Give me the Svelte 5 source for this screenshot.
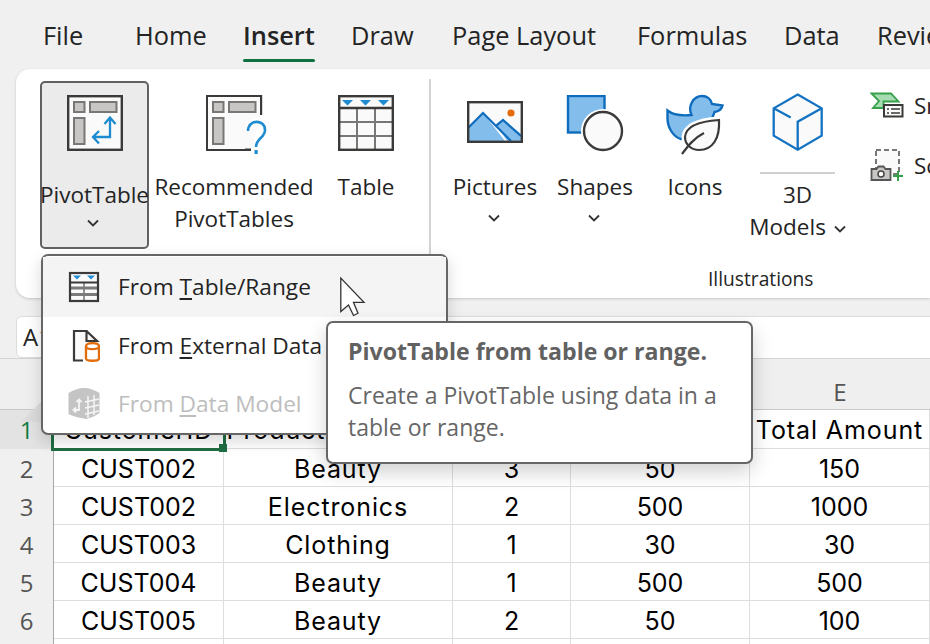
<script>
  const tabs = ['File', 'Home', 'Insert', 'Draw', 'Page Layout', 'Formulas', 'Data', 'Review'];
  const rows = [
    ['1', 'CustomerID', 'Product Category', 'Quantity', 'Price per Unit', 'Total Amount'],
    ['2', 'CUST002', 'Beauty', '3', '50', '150'],
    ['3', 'CUST002', 'Electronics', '2', '500', '1000'],
    ['4', 'CUST003', 'Clothing', '1', '30', '30'],
    ['5', 'CUST004', 'Beauty', '1', '500', '500'],
    ['6', 'CUST005', 'Beauty', '2', '50', '100'],
    ['7', '', '', '', '', '']
  ];
  const hasLower = (s) => /[a-z]/.test(s);
</script>

<div class="app">
  <nav class="tabs">
    {#each tabs as t}
      <div class="tab" class:active={t === 'Insert'}><span>{t}</span></div>
    {/each}
  </nav>

  <section class="ribbon">
    <div class="btn pivot">
      <svg width="56" height="56" viewBox="66 95 56 56">
        <rect x="67.2" y="96.2" width="53.6" height="53.6" fill="#fafafa" stroke="#3b3a39" stroke-width="2.4"/>
        <g fill="#c8c6c4" stroke="#797775" stroke-width="2">
          <rect x="73" y="102" width="10.5" height="10"/><rect x="89" y="102" width="26.5" height="10"/><rect x="73" y="118" width="10.5" height="26"/>
        </g>
        <path d="M109 118v19H92M103.500 124l5.500-6.500 5.500 6.500M98 131l-6 6 6 6.500" fill="none" stroke="#1f8bd0" stroke-width="2.300"/>
      </svg>
      <span class="label">PivotTable</span>
      <svg class="chev" width="12" height="8" viewBox="0 0 12 8"><path d="M1 1.500l5 5 5-5"/></svg>
    </div>

    <div class="btn rec">
      <svg width="64" height="62" viewBox="206 95 64 62">
        <path d="M261 115V96.200H207.200V149.800H251" fill="#fafafa" stroke="#3b3a39" stroke-width="2.400"/>
        <path d="M208 97H260V118L245 135V149H208Z" fill="#fafafa"/>
        <g fill="#c8c6c4" stroke="#797775" stroke-width="2">
          <rect x="213" y="102" width="10.500" height="10"/><rect x="229" y="102" width="26.500" height="10"/><rect x="213" y="118" width="10.500" height="26"/>
        </g>
        <path d="M248 131c0-12 17-12 17-1 0 8-9 8-9 17" fill="none" stroke="#fff" stroke-width="7"/>
        <path d="M248 131c0-12 17-12 17-1 0 8-9 8-9 17" fill="none" stroke="#1f8bd0" stroke-width="2.600"/>
        <rect x="254.500" y="150" width="3.200" height="4" fill="#1f8bd0"/>
      </svg>
      <span class="label">Recommended<br>PivotTables</span>
    </div>

    <div class="btn tbl">
      <svg width="56" height="56" viewBox="339 95 56 56">
        <rect x="340" y="96" width="54" height="54" fill="#fafafa"/>
        <path d="M358 108v42M376 108v42M340 122h54M340 136h54" stroke="#797775" stroke-width="2" fill="none"/>
        <rect x="340.200" y="96.200" width="53.600" height="53.600" fill="none" stroke="#3b3a39" stroke-width="2.400"/>
        <path d="M340 108h54" stroke="#3b3a39" stroke-width="2.400"/>
        <path d="M343 100h11l-5.500 5.500zM361 100h11l-5.500 5.500zM379 100h11l-5.500 5.500z" fill="#1f8bd0"/>
      </svg>
      <span class="label">Table</span>
    </div>

    <div class="sep"></div>

    <div class="btn pics">
      <svg width="56" height="56" viewBox="467 95 56 56">
        <rect x="468.200" y="102.200" width="53.600" height="39.600" fill="#fafafa"/>
        <path d="M469 127l14-14 22 28H469Z" fill="#83bdec"/>
        <path d="M496 124l7-5 18 15v7h-14Z" fill="#83bdec"/>
        <path d="M468 128l15-15 28 28M496 126l7-6 18 16" fill="none" stroke="#0f6cbd" stroke-width="2.200"/>
        <circle cx="511" cy="113" r="3.600" fill="#e36c0a"/>
        <rect x="468.200" y="102.200" width="53.600" height="39.600" fill="none" stroke="#3b3a39" stroke-width="2.400"/>
      </svg>
      <span class="label">Pictures</span>
      <svg class="chev low" width="12" height="8" viewBox="0 0 12 8"><path d="M1 1.500l5 5 5-5"/></svg>
    </div>

    <div class="btn shapes">
      <svg width="58" height="58" viewBox="566 95 58 58">
        <rect x="568" y="96" width="36.500" height="36.500" fill="#83bdec" stroke="#0f6cbd" stroke-width="2.400"/>
        <circle cx="603" cy="131" r="22" fill="#fff"/>
        <circle cx="603" cy="131" r="19" fill="#fafafa" stroke="#3b3a39" stroke-width="2.400"/>
      </svg>
      <span class="label">Shapes</span>
      <svg class="chev low" width="12" height="8" viewBox="0 0 12 8"><path d="M1 1.500l5 5 5-5"/></svg>
    </div>

    <div class="btn icons">
      <svg width="58" height="62" viewBox="666 94 58 62">
        <path d="M667.500 110.500c5 4 14 5.500 24 4.500-4-9 2-19 10.500-19 5 0 9 3 10 8l10.500 1.500c-1 4-4 6-8 6.500l-3 8-22 18-9 1c-8-3-13-12-13-21Z" fill="#83bdec" stroke="#0f6cbd" stroke-width="2.400"/>
        <path d="M719 120c-16 1-33 5-34 17 0 8 7 13 14 13 14 0 21-12 20-30Z" fill="#fff" stroke="#fff" stroke-width="7"/>
        <path d="M719 120c-16 1-33 5-34 17 0 8 7 13 14 13 14 0 21-12 20-30Z" fill="#fafafa" stroke="#3b3a39" stroke-width="2.200"/>
        <path d="M682 154c6-8 12-16 22-21" fill="none" stroke="#3b3a39" stroke-width="2.200"/>
      </svg>
      <span class="label">Icons</span>
    </div>

    <div class="btn models">
      <svg width="52" height="58" viewBox="771 93 52 58">
        <path d="M796.700 94.500l24 13.800v27.400l-24 14-24-14V108.300Z" fill="#fafafa" stroke="#1372c2" stroke-width="2.300"/>
        <path d="M796.700 150v-28.300l24-13.400M772.700 108.300l17 9.200" fill="none" stroke="#1372c2" stroke-width="2.300"/>
      </svg>
      <div class="rule"></div>
      <span class="label">3D<br>Models <svg class="chev inl" width="12" height="8" viewBox="0 0 12 8"><path d="M1 1.500l5 5 5-5"/></svg></span>
    </div>

    <div class="side">
      <div class="side-item">
        <svg width="34" height="26" viewBox="869 92 34 26">
          <path d="M870.500 93.500H890l7.500 8H882.500V108H872l6-7Z" fill="#a7dcb3" stroke="#37a04b" stroke-width="1.800"/>
          <rect x="883" y="105" width="18.500" height="11.500" fill="#fafafa" stroke="#3b3a39" stroke-width="2"/>
          <path d="M886 109h2M890 109h9M886 113h2M890 113h9" stroke="#3b3a39" stroke-width="1.400"/>
        </svg>
        <span>Smart</span>
      </div>
      <div class="side-item">
        <svg width="34" height="34" viewBox="869 148 34 34">
          <rect x="875" y="150" width="23" height="24" fill="#fafafa" stroke="#777" stroke-width="2" stroke-dasharray="5 3"/>
          <path d="M870.500 169h5l2-2.500h5l2 2.500h5v11h-19Z" fill="#c8c6c4" stroke="#555" stroke-width="1.800"/>
          <circle cx="880" cy="174" r="3" fill="#fff" stroke="#444" stroke-width="1.500"/>
          <path d="M897 171v10M892 176h10" stroke="#37a04b" stroke-width="2"/>
        </svg>
        <span>Screenshot</span>
      </div>
    </div>

    <div class="group-title">Illustrations</div>
  </section>

  <div class="fbar">
    <div class="namebox">A1</div>
    <div class="formula"></div>
  </div>

  <div class="sheet">
    <div class="cols">
      <div class="corner"><i></i></div>
      <div>A</div><div>B</div><div>C</div><div>D</div><div>E</div>
    </div>
    {#each rows as r, i}
      <div class="row" class:first={i === 0}>
        {#each r as c, j}
          <div class={j === 0 ? 'rh' : 'cell'} class:word={j > 0 && hasLower(c)}>{c}</div>
        {/each}
      </div>
    {/each}
    <div class="sel"><b></b></div>
  </div>

  <div class="menu">
    <div class="mi hover">
      <svg width="32" height="32" viewBox="67 269 32 32">
        <rect x="68" y="270" width="30" height="30" fill="#fafafa"/>
        <path d="M69 286h28M69 292.500h28" stroke="#7a7a7a" stroke-width="3"/>
        <path d="M83 281v18" stroke="#7a7a7a" stroke-width="1.600"/>
        <rect x="69" y="271" width="28" height="28" fill="none" stroke="#3b3a39" stroke-width="2.200"/>
        <path d="M68 280.500h30" stroke="#3b3a39" stroke-width="2"/>
        <path d="M72 273.500h8l-4 4zM86 273.500h8l-4 4z" fill="#1f8bd0"/>
      </svg>
      <span>From <u>T</u>able/Range</span>
    </div>
    <div class="mi">
      <svg width="32" height="34" viewBox="67 327 32 34">
        <path d="M73 329h12l11 11v18H73Z" fill="#fafafa"/>
        <path d="M82 358.500H73V329H85.500V339H96L85.500 329" fill="none" stroke="#3b3a39" stroke-width="2.200"/>
        <path d="M85 344.500c0-4.500 13-4.500 13 0v12c0 3-13 3-13 0Z" fill="#fff" stroke="#e36c0a" stroke-width="2.300"/>
        <path d="M85 344.500c0 3.500 13 3.500 13 0" fill="none" stroke="#e36c0a" stroke-width="2.300"/>
      </svg>
      <span>From <u>E</u>xternal Data</span>
    </div>
    <div class="mi off">
      <svg width="32" height="34" viewBox="68 385 32 34">
        <path d="M68.500 391c5-3 10-5 16-5 5 0 10 2 15 5v20c-4 3-9 5-13 6-6-1-12-2-18-5Z" fill="#c4c4c4"/>
        <path d="M88 394v22M94 393v20M85 400l14-3M85 406l14-3M85 412l14-3" stroke="#f5f5f5" stroke-width="1.500"/>
        <path d="M79 398v10h-5M76.500 400l2.500-2.500 2.500 2.500M76 405.500l-2.500 2.500 2.500 2.500" fill="none" stroke="#f5f5f5" stroke-width="1.800"/>
      </svg>
      <span>From <u>D</u>ata Model</span>
    </div>
  </div>

  <svg class="cursor" width="28" height="42" viewBox="339 276 28 42">
    <path d="M340.800 278v33.500l7.700-6.500 5 10.500 4.500-2.200-4.500-11h10.500Z" fill="#fff" stroke="#333" stroke-width="1.300"/>
  </svg>

  <div class="tip">
    <h4>PivotTable from table or range.</h4>
    <p>Create a PivotTable using data in a<br>table or range.</p>
  </div>
</div>

<style>
  :global(body) { margin: 0; }
  .app {
    position: relative; width: 930px; height: 644px; overflow: hidden;
    background: #f0f0f0; color: #242424;
    font-family: "Open Sans", "Noto Sans", sans-serif;
  }
  .tabs {
    display: grid; height: 69px; padding-left: 43px; box-sizing: border-box;
    grid-template-columns: 92px 108px 108px 101px 185px 147px 93px 100px;
    font-size: 25.400px; line-height: 71px; white-space: nowrap;
  }
  .tab span { display: inline-block; position: relative; }
  .tab.active { font-weight: 600; }
  .tab.active span::after {
    content: ""; position: absolute; left: 0; right: 0; top: 59px; height: 3px;
    background: #107040; border-radius: 2px;
  }
  .ribbon {
    position: relative; display: flex; height: 229px; margin-left: 16px; padding: 12px 0 0 24px;
    box-sizing: border-box; background: #fff; border-radius: 14px 0 0 14px;
    box-shadow: 0 1px 3px rgba(0,0,0,.18); font-size: 22.500px; overflow: hidden;
  }
  .ribbon > * { flex: none; }
  .btn { display: flex; flex-direction: column; align-items: center; padding-top: 14px; box-sizing: border-box; text-align: center; white-space: nowrap; line-height: 32px; }
  .label { margin-top: 20px; display: block; }
  .pivot { width: 109px; height: 168px; border: 2px solid #616161; border-radius: 5px; background: #ebebeb; padding-top: 12px; }
  .pivot .label { margin-top: 28px; }
  .pivot .chev { margin-left: -3px; margin-top: 8px; }
  .rec { width: 170px; }
  .rec svg:first-child { margin-left: 8px; margin-bottom: -6px; }
  .tbl { width: 94px; }
  .sep { width: 2px; height: 190px; margin: -2px 14px 0 16px; background: #d4d4d4; }
  .pics { width: 100px; }
  .pics .chev, .shapes .chev { margin-left: -2px; }
  .shapes { width: 100px; }
  .shapes svg:first-child { margin-bottom: -2px; }
  .icons { width: 100px; }
  .icons svg:first-child { margin-top: -1px; margin-bottom: -5px; }
  .models { width: 105px; }
  .models svg:first-child { margin-top: -2px; }
  .rule { width: 75px; height: 2px; background: #d0d0d0; margin-top: 21px; }
  .models .label { margin-top: 5px; }
  .chev { fill: none; stroke: #333; stroke-width: 1.800; margin-top: 10px; flex: none; }
  .chev.low { margin-top: 11px; }
  .chev.inl { margin: 0 0 0 2px; vertical-align: 2px; }
  .side { display: flex; flex-direction: column; margin: -6px 0 0 20px; white-space: nowrap; }
  .side-item { display: flex; align-items: center; gap: 10px; height: 60px; }
  .group-title { position: absolute; left: 692px; top: 196px; font-size: 19.200px; line-height: 28px; }
  .fbar { display: flex; height: 42px; margin-top: 18px; gap: 10px; box-sizing: border-box; }
  .namebox {
    width: 300px; margin-left: 16px; box-sizing: border-box; background: #fff; border: 1px solid #dcdcdc;
    border-radius: 6px; padding-left: 6px; font-size: 24px; line-height: 40px;
  }
  .formula { flex: 1; background: #fff; border-top: 1px solid #dcdcdc; }
  .sheet { position: relative; }
  .cols, .row {
    display: grid; grid-template-columns: 54px 170px 229px 118px 179px 180px; white-space: nowrap;
  }
  .cols { height: 52px; background: #efefef; border-top: 1px solid #d4d4d4; border-bottom: 1px solid #c8c8c8; box-sizing: border-box; font-size: 24px; color: #555; text-align: center; line-height: 66px; }
  .corner { position: relative; }
  .corner i { position: absolute; right: 3px; bottom: 3px; width: 30px; height: 30px; background: #dcdcdc; clip-path: polygon(100% 0, 100% 100%, 0 100%); }
  .row { height: 38px; box-sizing: border-box; border-bottom: 1px solid #dedede; background: #fff; }
  .row.first { height: 39px; }
  .rh { background: #f0f0f0; border-right: 1px solid #a8a8a8; text-align: center; font-size: 24px; color: #555; line-height: 39px; }
  .first .rh { background: #e3e3e3; color: #107c41; }
  .cell { border-right: 1px solid #dedede; text-align: center; font-family: "Inter", sans-serif; font-size: 25px; color: #000; line-height: 40px; overflow: hidden; }
  .cell.word { letter-spacing: .9px; }
  .sel { position: absolute; left: 51px; top: 50px; width: 175px; height: 43px; box-sizing: border-box; border: 3px solid #1f6e43; pointer-events: none; }
  .sel b { position: absolute; right: -4px; bottom: -4px; width: 8px; height: 8px; background: #1f6e43; }

  .menu {
    position: absolute; left: 41px; top: 254px; width: 407px; height: 181px; box-sizing: border-box; padding-top: 2px;
    background: #fff; border: 2px solid #666; border-radius: 7px; box-shadow: 0 6px 16px rgba(0,0,0,.16); font-size: 22.700px;
  }
  .mi { display: flex; align-items: center; height: 58px; padding-left: 25px; gap: 18px; line-height: 58px; white-space: nowrap; }
  .mi svg { flex: none; }
  .hover { height: 60px; margin-top: -1px; background: #f4f4f4; }
  .off { color: #bdbdbd; }
  u { text-underline-offset: 3px; text-decoration-thickness: 1.500px; }
  .cursor { position: absolute; left: 339px; top: 276px; }
  .tip {
    position: absolute; left: 326px; top: 321px; width: 427px; height: 143px; box-sizing: border-box;
    background: #fff; border: 2px solid #666; border-radius: 7px; padding: 12px 20px; color: #666; box-shadow: 0 8px 20px rgba(0,0,0,.18);
  }
  .tip h4 { margin: 0; font-size: 23.100px; font-weight: 700; line-height: 32px; color: #616161; }
  .tip p { margin: 12px 0 0; font-size: 23px; line-height: 32px; }
</style>
